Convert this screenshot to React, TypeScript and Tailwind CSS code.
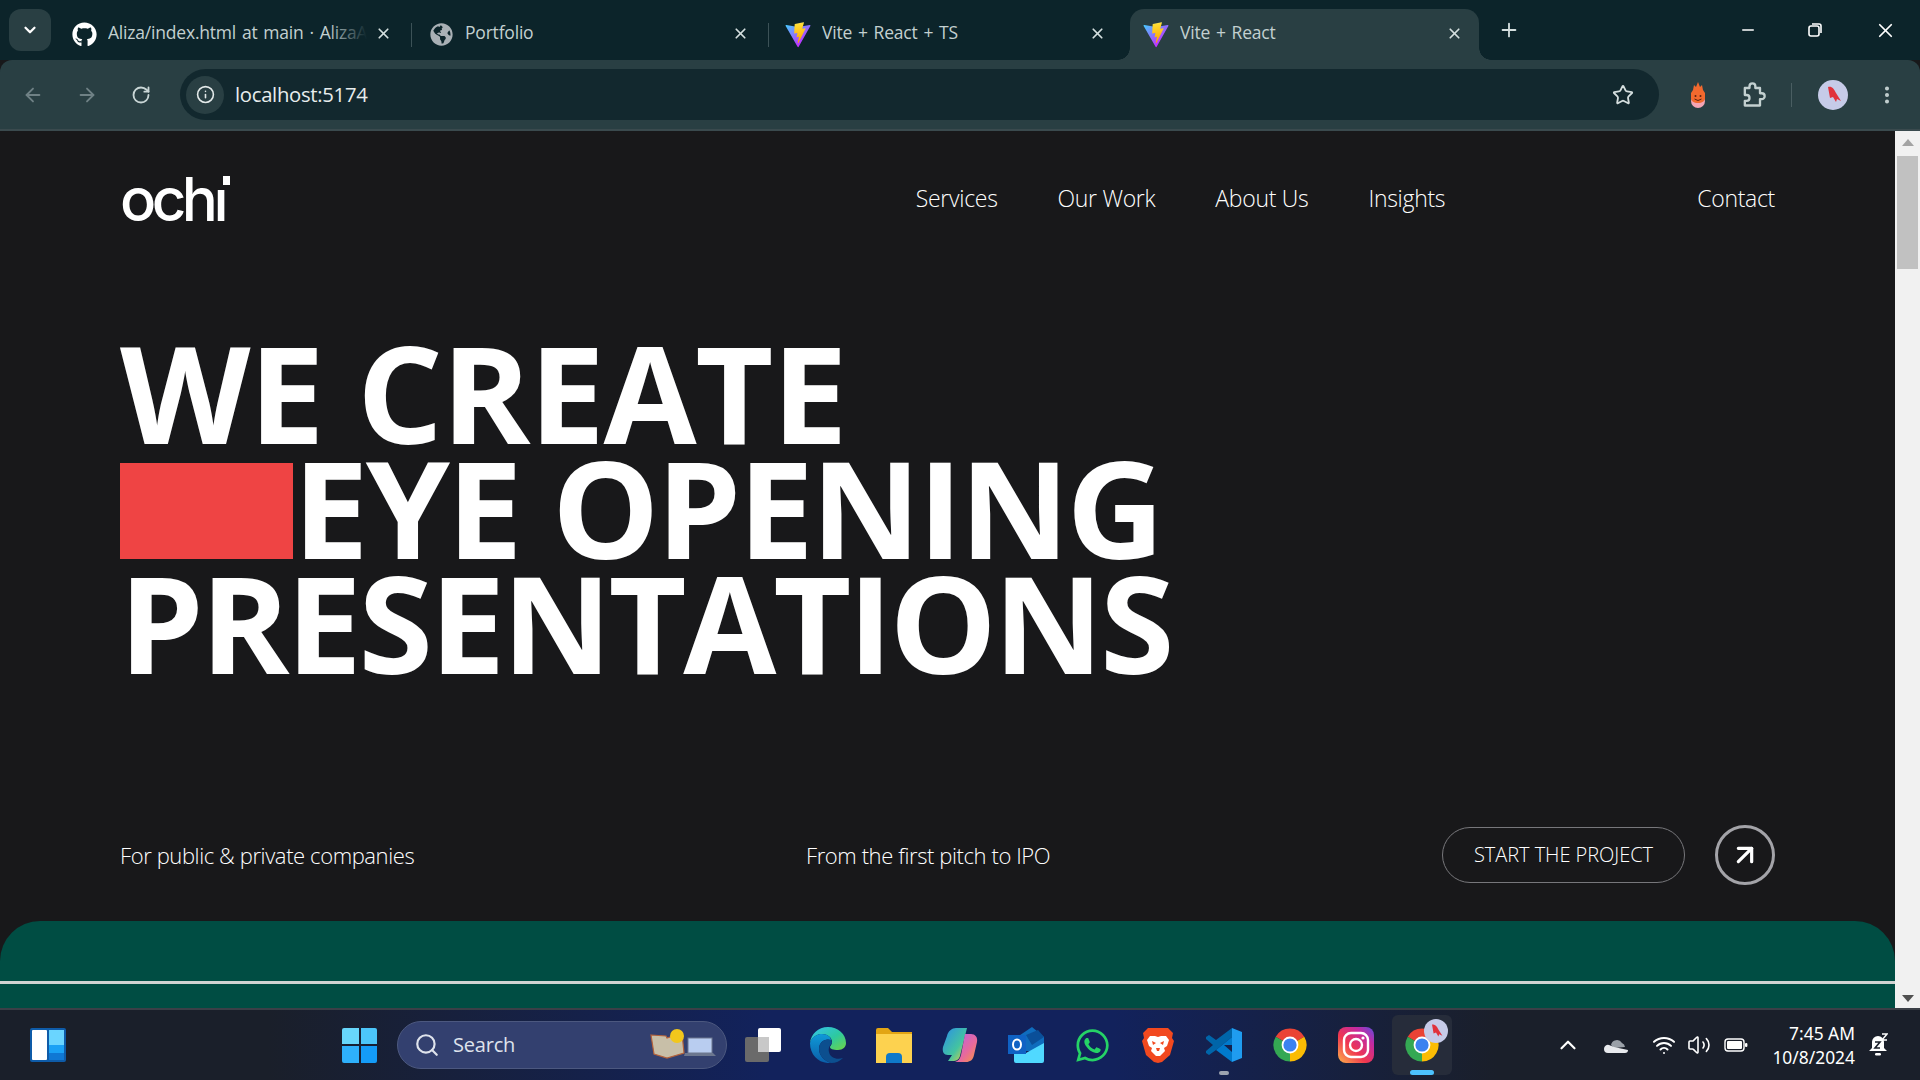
import { ArrowLeft, ArrowRight, RotateCw, Info, Star, EllipsisVertical, X, Plus, Minus, ChevronDown, ChevronUp, Search, Wifi, Volume2, ArrowUpRight } from "lucide-react";
import { FaGithub, FaWhatsapp, FaGlobeAmericas } from "react-icons/fa";

const ViteIcon = ({ id }: { id: string }) => (
  <svg viewBox="0 0 410 404" className="w-[26px] h-[26px]">
    <defs>
      <linearGradient id={id + "a"} x1="6" y1="33" x2="235" y2="344" gradientUnits="userSpaceOnUse">
        <stop stopColor="#41D1FF" />
        <stop offset="1" stopColor="#BD34FE" />
      </linearGradient>
      <linearGradient id={id + "b"} x1="194" y1="8" x2="236" y2="292" gradientUnits="userSpaceOnUse">
        <stop stopColor="#FFEA83" />
        <stop offset=".08" stopColor="#FFDD35" />
        <stop offset="1" stopColor="#FFA800" />
      </linearGradient>
    </defs>
    <path fill={`url(#${id}a)`} d="M399.641 59.525 215.643 388.545c-3.799 6.793-13.559 6.833-17.415.073L10.582 59.556C6.38 52.19 12.68 43.266 21.028 44.76l184.195 32.923c1.175.21 2.378.208 3.553-.006l180.343-32.87c8.32-1.517 14.649 7.337 10.522 14.719Z" />
    <path fill={`url(#${id}b)`} d="M292.965 1.574 156.801 28.255a5 5 0 0 0-4.03 4.611l-8.376 141.464c-.197 3.332 2.863 5.918 6.115 5.168l37.91-8.749c3.547-.818 6.752 2.306 6.023 5.873l-11.263 55.153c-.758 3.712 2.727 6.886 6.352 5.785l23.415-7.114c3.63-1.102 7.118 2.081 6.35 5.796l-17.899 86.633c-1.12 5.419 6.088 8.374 9.094 3.728l2.008-3.103 110.954-221.428c1.858-3.707-1.346-7.935-5.418-7.15l-39.022 7.532c-3.667.707-6.787-2.708-5.752-6.296l25.469-88.291c1.036-3.594-2.095-7.012-5.766-6.293Z" />
  </svg>
);

const ChromeIcon = () => (
  <svg viewBox="0 0 24 24" className="w-[36px] h-[36px]">
    <path fill="#ea4335" d="M12 12 2.47 6.5A11 11 0 0 1 21.53 6.5Z" />
    <path fill="#34a853" d="M12 12 2.47 6.5A11 11 0 0 0 12 23Z" />
    <path fill="#fbbc04" d="M12 12 21.53 6.5A11 11 0 0 1 12 23Z" />
    <circle cx="12" cy="12" r="5.6" fill="#fff" />
    <circle cx="12" cy="12" r="4.4" fill="#3b82f0" />
  </svg>
);

const Avatar = ({ size }: { size: string }) => (
  <svg viewBox="0 0 30 30" className={size}>
    <circle cx="15" cy="15" r="15" fill="#c6cbe8" />
    <path fill="#e0323c" d="M10 7c4-1 6 2 8 6l5 8-4-2-1 3-3-5-3 1z" />
  </svg>
);

const Tab = ({ icon, title, active, fade }: { icon: React.ReactNode; title: string; active?: boolean; fade?: boolean }) => (
  <div className={active ? "relative flex items-center h-[51px] w-[349px] ml-1 pl-[13px] pr-[16px] bg-[#293f43] rounded-t-[14px]" : "flex items-center h-[51px] w-[357px] pl-4 pr-[20px]"}>
    {active && <div className="absolute left-[-12px] bottom-0 w-3 h-3 bg-[radial-gradient(circle_at_0_0,transparent_11.5px,#293f43_12px)]" />}
    {active && <div className="absolute right-[-12px] bottom-0 w-3 h-3 bg-[radial-gradient(circle_at_100%_0,transparent_11.5px,#293f43_12px)]" />}
    <div className="w-[26px] h-[26px] flex items-center justify-center shrink-0">{icon}</div>
    <div className="relative flex-1 ml-[11px] mt-[-5px] overflow-hidden whitespace-nowrap text-[17.5px] tracking-[-0.2px] [word-spacing:1.5px] text-[#c3d0d0]">
      {title}
      {fade && <div className="absolute right-0 top-0 h-full w-10 bg-gradient-to-r from-transparent to-[#0c242a]" />}
    </div>
    <X size={17} strokeWidth={2.4} className="text-[#d5dfdf] shrink-0 ml-2 mt-[-3px]" />
  </div>
);

const Sep = () => <div className="w-px h-[24px] bg-[#3c5257] -ml-px" />;

const Edge = () => (
  <svg viewBox="0 0 36 36" className="w-9 h-9">
    <defs>
      <linearGradient id="edge1" x1="0" y1="0" x2="1" y2="1">
        <stop stopColor="#35c1f1" />
        <stop offset=".55" stopColor="#2dc9a0" />
        <stop offset="1" stopColor="#6ed444" />
      </linearGradient>
      <linearGradient id="edge2" x1="0" y1="0" x2="0" y2="1">
        <stop stopColor="#0f9ad8" />
        <stop offset="1" stopColor="#0b5ea8" />
      </linearGradient>
    </defs>
    <path fill="url(#edge1)" d="M18 0c10 0 18 7 18 16 0 4-3 7-8 7s-8-1-8-3c0-1 2-2 2-5 0-5-5-8-10-8S2 10 0 16C1 7 8 0 18 0Z" />
    <path fill="url(#edge2)" d="M0 16C2 9 8 7 12 7c5 0 9 3 9 6-6-2-12 2-12 9 0 6 5 12 12 14C10 37 0 29 0 16Z" />
    <path fill="#0c4f8f" d="M21 13c-6-2-12 2-12 9 0 6 5 12 12 14 5 0 9-2 12-5-6 2-13 0-14-6-1-4 1-7 3-9Z" />
  </svg>
);

const Explorer = () => (
  <svg viewBox="0 0 36 36" className="w-9 h-9">
    <path fill="#e2a514" d="M0 3a2 2 0 0 1 2-2h10l4 4h20v8H0Z" />
    <path fill="#fdd24f" d="M0 7h36v29H0Z" />
    <path fill="#0f79c9" d="M10 30a4 4 0 0 1 4-4h8a4 4 0 0 1 4 4v6H10Z" />
  </svg>
);

const Copilot = () => (
  <svg viewBox="0 0 36 36" className="w-9 h-9">
    <defs>
      <linearGradient id="cp1" x1="0" y1="0" x2="1" y2="1">
        <stop stopColor="#2a8fe8" />
        <stop offset=".6" stopColor="#44c4a0" />
        <stop offset="1" stopColor="#f2d13a" />
      </linearGradient>
      <linearGradient id="cp2" x1="0" y1="0" x2="1" y2="1">
        <stop stopColor="#b660e8" />
        <stop offset=".6" stopColor="#e86a9a" />
        <stop offset="1" stopColor="#f79a3c" />
      </linearGradient>
    </defs>
    <path fill="url(#cp1)" d="M14 1h11l-7 28c-1 4-4 5-7 5H6l4-6H6c-4 0-6-3-5-8l4-11c1-5 5-8 9-8Z" />
    <path fill="url(#cp2)" d="M23 7h6c4 0 7 3 6 8l-3 13c-1 5-4 7-8 7H13c3-1 5-3 6-7Z" />
  </svg>
);

const Outlook = () => (
  <svg viewBox="0 0 36 36" className="w-9 h-9">
    <path fill="#0f6cbd" d="M6 12 24 0l12 10v14H6Z" />
    <path fill="#0a4f99" d="M18 8 30 3l6 7-12 8Z" />
    <path fill="#50d9ff" d="M6 20l12 6 18-10v18a2 2 0 0 1-2 2H8a2 2 0 0 1-2-2Z" />
    <rect x="0" y="8" width="18" height="19" fill="#0f62c4" />
    <ellipse cx="9" cy="17.5" rx="4" ry="5" fill="none" stroke="#fff" strokeWidth="2" />
  </svg>
);

const Brave = () => (
  <svg viewBox="0 0 36 36" className="w-9 h-9">
    <g transform="translate(2 0)">
      <path fill="#f2491f" d="M6 1h20l5 5-1 5 2 3-4 14-8 7-4 1-4-1-8-7L0 14l2-3-1-5Z" />
      <path fill="#fff" d="M8 9h5l3 1 3-1h5l3 4-2 6-3 2 1 3-5 5h-4l-5-5 1-3-3-2-2-6Z" />
      <path fill="#f2491f" d="M10 14l4 2-3 2ZM22 14l-4 2 3 2ZM14 21h4l-1 3h-2Z" />
    </g>
  </svg>
);

const VsCode = () => (
  <svg viewBox="0 0 36 36" className="w-9 h-9">
    <path fill="#1f9cf0" d="M26 1l10 4v26l-10 4Z" />
    <path fill="#0065a9" d="M26 1v9L10 23 3 28l-3-2v-2l7-6L0 12v-2l3-2 7 5Z" />
    <path fill="#007acc" d="M26 35 10 23l16-13v8l-8 0 8 7Z" />
  </svg>
);

const Instagram = () => (
  <svg viewBox="0 0 36 36" className="w-9 h-9">
    <defs>
      <linearGradient id="ig" x1="0" y1="1" x2="1" y2="0">
        <stop stopColor="#fdb44b" />
        <stop offset=".4" stopColor="#f0364f" />
        <stop offset=".75" stopColor="#c32aa3" />
        <stop offset="1" stopColor="#5b4fe0" />
      </linearGradient>
    </defs>
    <rect width="36" height="36" rx="8" fill="url(#ig)" />
    <rect x="6" y="6" width="24" height="24" rx="7" fill="none" stroke="#fff" strokeWidth="2.4" />
    <circle cx="18" cy="18" r="6" fill="none" stroke="#fff" strokeWidth="2.4" />
    <circle cx="25" cy="11" r="1.6" fill="#fff" />
  </svg>
);

const App = () => {
  return (
    <div className="h-screen w-full flex flex-col overflow-hidden bg-[#18181a] font-['Open_Sans',sans-serif]">
      {/* tab strip */}
      <div className="h-[60px] shrink-0 bg-[#0c242a] flex items-end relative">
        <div className="self-start mt-[9px] ml-[9px] w-[42px] h-[42px] rounded-[12px] bg-[#293f43] flex items-center justify-center text-white">
          <ChevronDown size={18} strokeWidth={3} />
        </div>
        <div className="flex items-center ml-1">
          <Tab icon={<FaGithub size={25} className="text-white" />} title="Aliza/index.html at main · AlizaA" fade />
          <Sep />
          <Tab icon={<FaGlobeAmericas size={23} className="text-[#a9b0b5]" />} title="Portfolio" />
          <Sep />
          <Tab icon={<ViteIcon id="t3" />} title="Vite + React + TS" />
          <Tab icon={<ViteIcon id="t4" />} title="Vite + React" active />
        </div>
        <Plus size={22} strokeWidth={2} className="self-center ml-[19px] mt-0 text-[#d5dfdf]" />
        <div className="ml-auto self-start flex items-center h-[60px] text-white">
          <Minus size={18} strokeWidth={2} className="mr-[50px]" />
          <svg viewBox="0 0 16 16" className="w-4 h-4 mr-[51px]" fill="none" stroke="#fff" strokeWidth="1.6">
            <rect x="2" y="4" width="10" height="10" rx="2" />
            <path d="M5 2h7a2 2 0 0 1 2 2v7" />
          </svg>
          <X size={23} strokeWidth={1.8} className="mr-[23px]" />
        </div>
      </div>

      {/* toolbar */}
      <div className="h-[71px] shrink-0 bg-[#293f43] rounded-t-[12px] border-b-[2px] border-[#3a4a4e] flex items-center">
        <ArrowLeft size={22} className="ml-[22px] text-[#6f8185]" />
        <ArrowRight size={22} className="ml-[32px] text-[#6f8185]" />
        <RotateCw size={20} strokeWidth={2.2} className="ml-[33px] text-[#c9d6d6]" />
        <div className="ml-[29px] w-[1479px] h-[51px] rounded-full bg-[#12282e] flex items-center pl-[6px] pr-[25px]">
          <div className="w-[38px] h-[38px] rounded-full bg-[#293f43] flex items-center justify-center text-[#e3e9e9]">
            <Info size={19} />
          </div>
          <span className="ml-[11px] text-[20.3px] tracking-[-0.3px] text-[#e7eded]">localhost:5174</span>
          <Star size={22} strokeWidth={2} className="ml-auto text-[#d5dfdf]" />
        </div>
        <div className="ml-[28px] w-[22px] h-[26px] flex items-center justify-center">
          <svg viewBox="0 0 20 26" className="w-5 h-[26px]">
            <ellipse cx="10" cy="19" rx="7" ry="7" fill="#f5a5b5" />
            <path fill="#f2692e" d="M10 0l2 5 2-2 1 5 2 3v5c0 3-3 5-7 5s-7-2-7-5v-5l2-3 1-5 2 2Z" />
            <circle cx="7.5" cy="14" r="1" fill="#5a2010" />
            <circle cx="12.5" cy="14" r="1" fill="#5a2010" />
            <path d="M6.5 17q3.5 3 7 0" stroke="#5a2010" fill="none" />
          </svg>
        </div>
        <svg viewBox="0 0 24 24" className="ml-[30px] w-[28px] h-[28px]" fill="none" stroke="#c3d0d0" strokeWidth="2" strokeLinejoin="round">
          <path d="M5 6h4V4.5a2.5 2.5 0 0 1 5 0V6h4v4.5h1.5a2.5 2.5 0 0 1 0 5H18V21H5v-4h1.5a2.5 2.5 0 0 0 0-5H5Z" />
        </svg>
        <div className="ml-[24px] w-px h-[24px] bg-[#4a5e62]" />
        <div className="ml-[26px]"><Avatar size="w-[30px] h-[30px]" /></div>
        <EllipsisVertical size={22} strokeWidth={2.4} className="ml-[28px] text-[#c3d0d0]" />
      </div>

      {/* page */}
      <div className="flex-1 min-h-0 flex">
        <div className="flex-1 min-w-0 overflow-hidden text-white">
          <div className="flex items-center justify-between px-[120px] h-[138px]">
            <div className="relative font-['Inter',sans-serif] font-medium text-[60px] leading-none tracking-[-0.075em] -mt-[2px]">
              ochi
              <div className="absolute right-[-3px] top-[4px] w-[15px] h-[17px] bg-[#18181a]" />
              <div className="absolute right-[-6px] top-[7px] w-[7px] h-[9px] bg-white" />
            </div>
            <div className="flex items-center text-[23px] font-light tracking-[-0.3px] -mt-[3px]">
              <span className="mr-[60px]">Services</span>
              <span className="mr-[60px]">Our Work</span>
              <span className="mr-[60px]">About Us</span>
              <span className="mr-[252px]">Insights</span>
              <span>Contact</span>
            </div>
          </div>

          <div className="px-[120px] pt-[66px] font-bold text-[135px] leading-[115px] uppercase">
            <div className="tracking-[-1.4px]">We create</div>
            <div className="flex items-center tracking-[-2.9px]">
              <div className="w-[173px] h-[96px] bg-[#ef4444] mr-0 mt-[6px]" />
              <span>Eye opening</span>
            </div>
            <div className="tracking-[-3.3px] -ml-[1px]">Presentations</div>
          </div>

          <div className="flex items-center px-[120px] mt-[145px] h-[60px] font-light text-[22px] tracking-[-0.4px]">
            <span className="w-[686px]">For public &amp; private companies</span>
            <span>From the first pitch to IPO</span>
            <div className="ml-auto w-[243px] h-[56px] rounded-full border border-[#77777b] flex items-center justify-center text-[20px] tracking-[-0.05px]">
              START THE PROJECT
            </div>
            <div className="ml-[30px] w-[60px] h-[60px] rounded-full border-[3px] border-[#a3a3a8] flex items-center justify-center">
              <ArrowUpRight size={32} strokeWidth={2.4} />
            </div>
          </div>

          <div className="mt-[36px] h-[200px] bg-[#004d43] rounded-t-[40px] pt-[60px]">
            <div className="h-[3px] bg-[#d0d3d2]" />
          </div>
        </div>

        {/* scrollbar */}
        <div className="w-[25px] shrink-0 bg-[#f1f1f1] flex flex-col items-center relative">
          <div className="mt-[8px] w-0 h-0 border-x-[6px] border-x-transparent border-b-[7px] border-b-[#a3a3a3]" />
          <div className="mt-[10px] w-[21px] h-[113px] bg-[#c1c1c1]" />
          <div className="mt-auto mb-[6px] w-0 h-0 border-x-[6px] border-x-transparent border-t-[7px] border-t-[#505050]" />
        </div>
      </div>

      {/* taskbar */}
      <div className="h-[72px] shrink-0 border-t-[2px] border-[#3b3f47] bg-[linear-gradient(90deg,#1a1f2a_0%,#1a1f2a_14%,#12225c_40%,#12225c_58%,#1a1f2a_78%,#1a1f2a_100%)] flex items-center relative">
        <div className="ml-[30px] w-[36px] h-[34px] bg-[#0e5ba8] rounded-[2px] flex p-[2px] gap-[2px]">
          <div className="w-[15px] bg-white rounded-[1px]" />
          <div className="flex-1 flex flex-col">
            <div className="flex-[2] bg-[#6ad5ff]" />
            <div className="flex-1 bg-[#1aa1f5]" />
            <div className="flex-1 bg-[#0f78d4]" />
          </div>
        </div>

        <div className="ml-[276px] grid grid-cols-2 gap-[2px] w-[35px] h-[35px]">
          <div className="bg-[#67d6fb] rounded-tl-[2px]" />
          <div className="bg-[#4cc6fa] rounded-tr-[2px]" />
          <div className="bg-[#2eb0fb] rounded-bl-[2px]" />
          <div className="bg-[#149cf8] rounded-br-[2px]" />
        </div>

        <div className="ml-[20px] w-[330px] h-[48px] rounded-full bg-[#33406f] border border-[#4c587f] flex items-center pl-[16px] pr-[10px] text-[#dfe3ec]">
          <Search size={26} strokeWidth={2} />
          <span className="ml-[13px] text-[20px] tracking-[-0.2px]">Search</span>
          <svg viewBox="0 0 66 36" className="ml-auto w-[66px] h-[36px]">
            <path fill="#c8bfa8" stroke="#b5623a" strokeWidth="1.2" d="M1 8l15 1 1 2 15-5 2 20-17 5-13-4Z" />
            <circle cx="27" cy="9" r="7" fill="#f2c71c" />
            <rect x="38" y="11" width="24" height="15" fill="#b9cdf0" stroke="#6c778f" />
            <path fill="#6c778f" d="M35 26h28l3 3H34Z" />
          </svg>
        </div>

        <div className="ml-[18px] relative w-[36px] h-[34px]">
          <div className="absolute left-[13px] top-0 w-[23px] h-[24px] bg-white rounded-[2px]" />
          <div className="absolute left-0 bottom-0 w-[24px] h-[25px] bg-[#6a6a6a] rounded-[2px]" />
          <div className="absolute left-[13px] top-[9px] w-[11px] h-[15px] bg-[#c8c8c8]" />
        </div>

        <div className="ml-[29px] flex items-center gap-[30px]">
          <Edge />
          <Explorer />
          <Copilot />
          <Outlook />
          <div className="w-9 h-9 flex items-center justify-center">
            <FaWhatsapp size={37} className="text-[#25d366] shrink-0" />
          </div>
          <Brave />
          <div className="relative">
            <VsCode />
            <div className="absolute left-[13px] bottom-[-12px] w-[10px] h-[4px] rounded-full bg-[#9ca3af]" />
          </div>
          <ChromeIcon />
          <Instagram />
          <div className="relative w-[60px] h-[60px] -mx-3 rounded-[6px] bg-[#262c3a] flex items-center justify-center">
            <ChromeIcon />
            <div className="absolute right-[4px] top-[4px]"><Avatar size="w-[24px] h-[24px]" /></div>
            <div className="absolute left-[18px] bottom-0 w-[24px] h-[5px] rounded-full bg-[#4cc2ff]" />
          </div>
        </div>

        <div className="ml-auto flex items-center text-white">
          <ChevronUp size={26} strokeWidth={2} />
          <svg viewBox="0 0 24 16" className="ml-[23px] w-6 h-4">
            <path fill="#9aa0a8" d="M7 8a6 6 0 0 1 11-2 5 5 0 0 1 3 4L10 11Z" />
            <path fill="#e8eaee" d="M0 12a4 4 0 0 1 5-4l5 2 14 3a3 3 0 0 1-3 3H4a4 4 0 0 1-4-4Z" />
          </svg>
          <Wifi size={24} className="ml-[24px]" />
          <Volume2 size={24} strokeWidth={1.6} className="ml-[11px]" />
          <svg viewBox="0 0 24 14" className="ml-[13px] w-6 h-[14px]" fill="none">
            <rect x="1" y="1" width="19" height="12" rx="3" stroke="#fff" strokeWidth="1.4" />
            <rect x="3" y="3" width="15" height="8" rx="1" fill="#fff" />
            <rect x="21" y="5" width="2.4" height="4" rx="1" fill="#fff" />
          </svg>
          <div className="ml-[24px] flex flex-col items-end text-[17.4px] leading-[24px] font-['Noto_Sans',sans-serif]">
            <span>7:45 AM</span>
            <span>10/8/2024</span>
          </div>
          <div className="ml-[13px] mr-[32px] w-[20px] h-[24px] relative">
            <svg viewBox="0 0 20 24" className="w-5 h-6">
              <path fill="#fff" d="M10 3a6 6 0 0 1 6 6v6l3 3H1l3-3V9a6 6 0 0 1 6-6Z" />
              <rect x="7" y="20" width="6" height="2.4" rx="1.2" fill="#fff" />
              <path fill="none" stroke="#1a1f2a" strokeWidth="1.6" d="M7 9h5l-5 6h5" />
              <path fill="none" stroke="#fff" strokeWidth="1.4" d="M14 1h5l-5 6h5" />
            </svg>
          </div>
        </div>
      </div>
    </div>
  );
};

export default App;
